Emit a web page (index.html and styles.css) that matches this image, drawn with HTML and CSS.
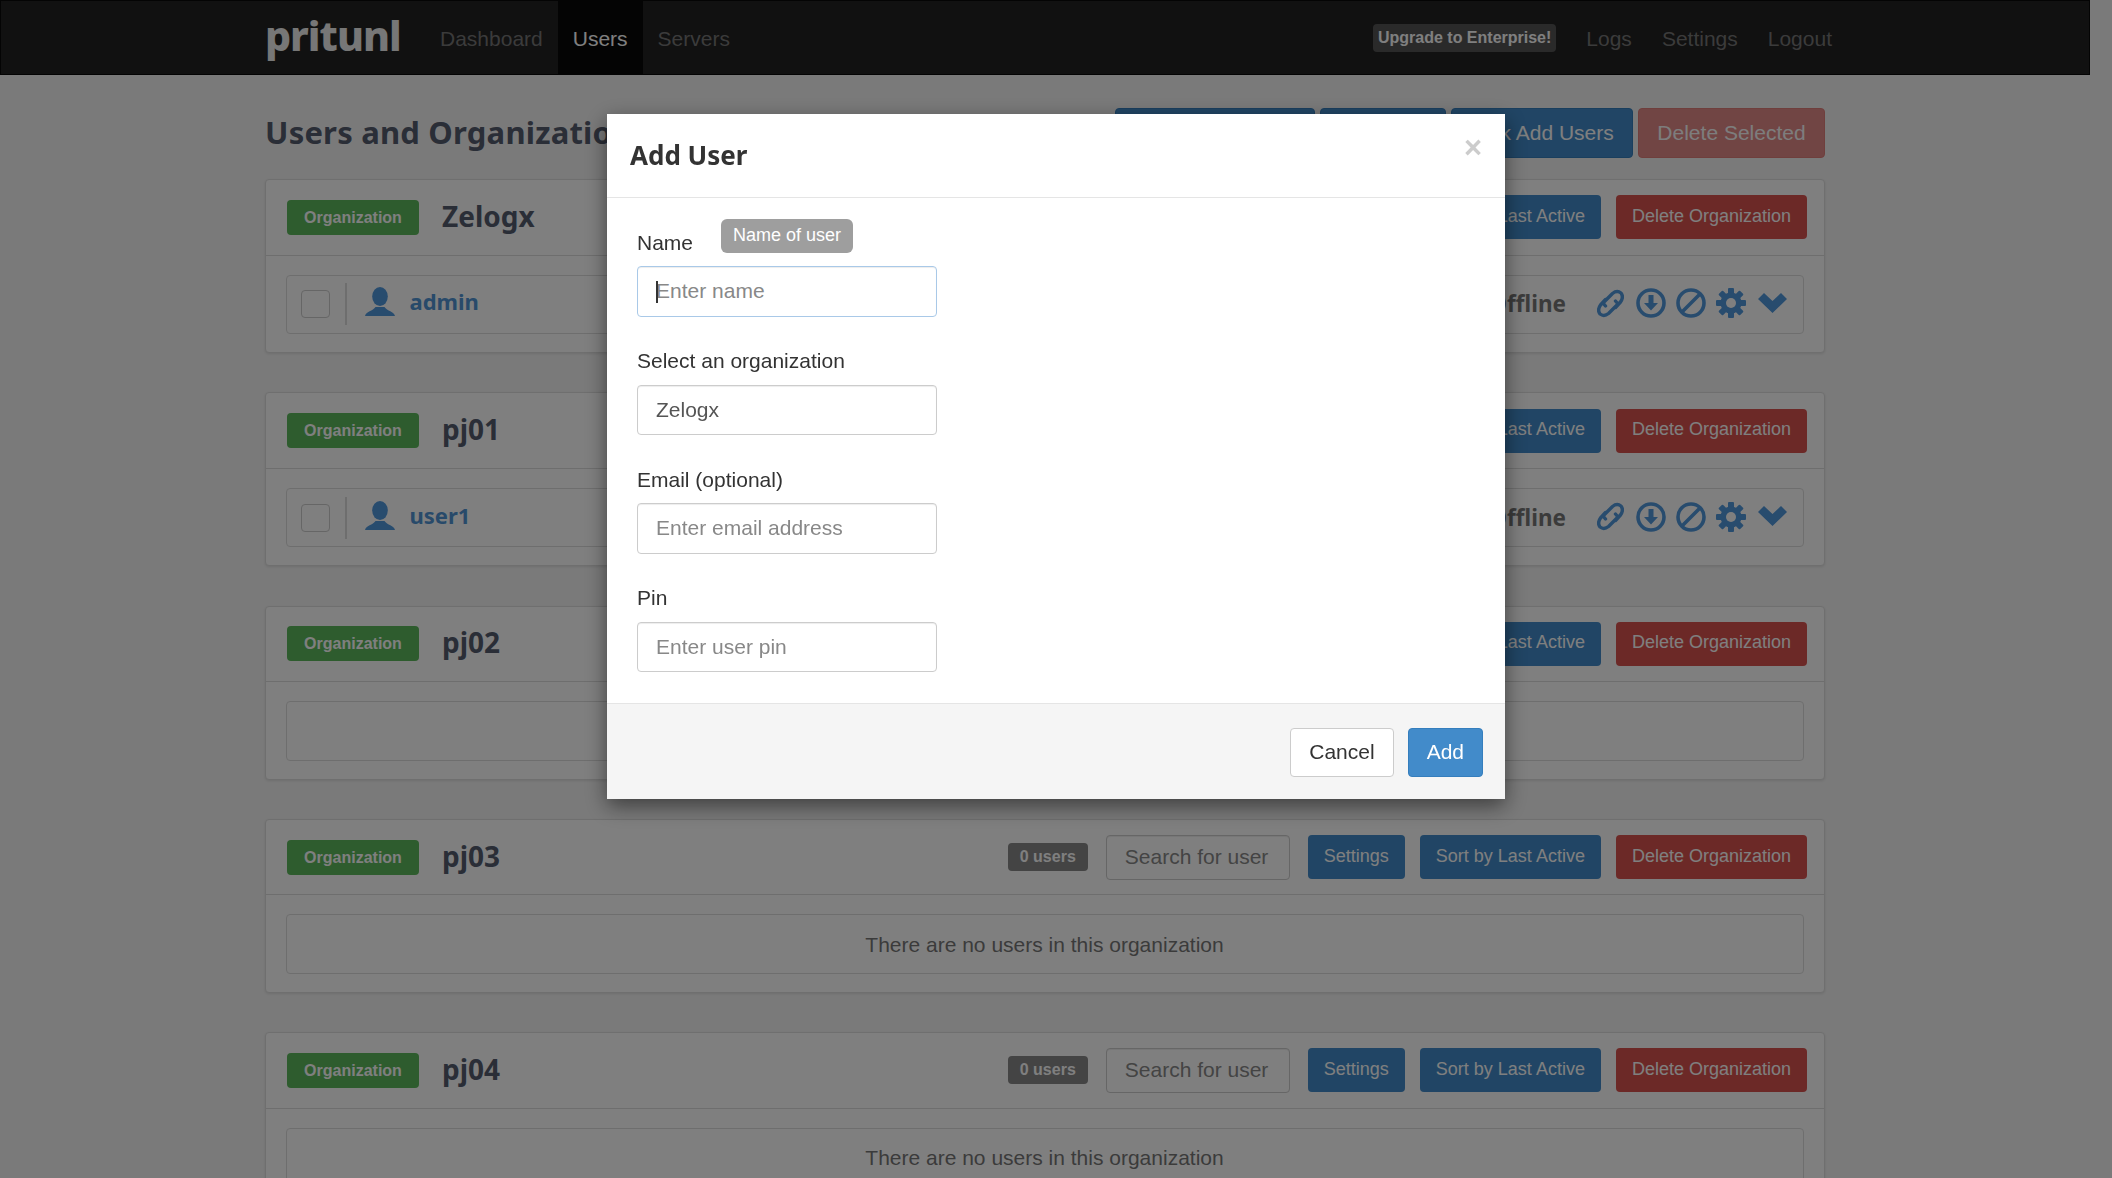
FILE: index.html
```html
<!DOCTYPE html>
<html lang="en">
<head>
<meta charset="utf-8">
<title>Users and Organizations - pritunl</title>
<link rel="stylesheet" href="styles.css">
</head>
<body>
<svg class="defs" width="0" height="0">
  <symbol id="i-user" viewBox="0 0 30 29"><ellipse cx="15" cy="9.5" rx="7.8" ry="9.5"/><path d="M0 29C.8 24.5 8 24 10.5 20h9C22 24 29.200 24.500 30 29Z"/></symbol>
  <symbol id="i-link" viewBox="0 0 27 31"><path class="ln ln-thin" d="M8.500 18 6 15 15.500 5.500Q20 2 24 5 27 9 23.500 14L18.500 19.500M18.500 13 21 16 11.500 25.500Q7 29 3 26 0 22 3.500 17L8.500 11.500"/></symbol>
  <symbol id="i-down" viewBox="0 0 30 30"><circle class="ln" cx="15" cy="15" r="13"/><path d="M12.500 7h5v8h4.500L15 22.500 8 15h4.500Z"/></symbol>
  <symbol id="i-ban" viewBox="0 0 30 30"><circle class="ln" cx="15" cy="15" r="13"/><path class="ln" d="M7 23 23 7"/></symbol>
  <symbol id="i-gear" viewBox="0 0 30 30">
    <g><rect x="12" y="0" width="6" height="30" rx="1"/><rect x="12" y="0" width="6" height="30" rx="1" transform="rotate(45 15 15)"/><rect x="12" y="0" width="6" height="30" rx="1" transform="rotate(90 15 15)"/><rect x="12" y="0" width="6" height="30" rx="1" transform="rotate(135 15 15)"/></g>
    <circle cx="15" cy="15" r="10.500"/><circle class="hole" cx="15" cy="15" r="5"/>
  </symbol>
  <symbol id="i-chev" viewBox="0 0 29 20"><path d="M0 6 6 0 14.500 8 23 0 29 6 14.500 20Z"/></symbol>
</svg>

<nav class="navbar">
  <a class="brand">pritunl</a>
  <a class="nav-link">Dashboard</a>
  <a class="nav-link active">Users</a>
  <a class="nav-link">Servers</a>
  <div class="nav-right">
    <span class="upgrade">Upgrade to Enterprise!</span>
    <a class="nav-link">Logs</a>
    <a class="nav-link">Settings</a>
    <a class="nav-link">Logout</a>
  </div>
</nav>

<main class="container">
  <div class="page-head">
    <h1 class="page-title">Users and Organizations</h1>
    <div class="page-actions">
      <button class="btn btn-blue btn-w1">Add Organization</button>
      <button class="btn btn-blue btn-w2">Add User</button>
      <button class="btn btn-blue btn-w3">Bulk Add Users</button>
      <button class="btn btn-red btn-faded btn-w4">Delete Selected</button>
    </div>
  </div>

  <section class="panel">
    <header class="panel-head">
      <span class="org-badge">Organization</span><h2 class="org-name">Zelogx</h2>
      <div class="org-actions">
        <span class="count">1 users</span><input class="search" placeholder="Search for user">
        <button class="sbtn btn-blue">Settings</button><button class="sbtn btn-blue">Sort by Last Active</button><button class="sbtn btn-red">Delete Organization</button>
      </div>
    </header>
    <div class="panel-body">
      <div class="row">
        <span class="check"></span><span class="divider"></span>
        <svg class="i-user"><use href="#i-user"/></svg><span class="uname">admin</span>
        <span class="status">Offline</span>
        <svg class="i-link"><use href="#i-link"/></svg><svg class="i-30"><use href="#i-down"/></svg><svg class="i-30"><use href="#i-ban"/></svg><svg class="i-30"><use href="#i-gear"/></svg><svg class="i-chev"><use href="#i-chev"/></svg>
      </div>
    </div>
  </section>

  <section class="panel">
    <header class="panel-head">
      <span class="org-badge">Organization</span><h2 class="org-name">pj01</h2>
      <div class="org-actions">
        <span class="count">1 users</span><input class="search" placeholder="Search for user">
        <button class="sbtn btn-blue">Settings</button><button class="sbtn btn-blue">Sort by Last Active</button><button class="sbtn btn-red">Delete Organization</button>
      </div>
    </header>
    <div class="panel-body">
      <div class="row">
        <span class="check"></span><span class="divider"></span>
        <svg class="i-user"><use href="#i-user"/></svg><span class="uname">user1</span>
        <span class="status">Offline</span>
        <svg class="i-link"><use href="#i-link"/></svg><svg class="i-30"><use href="#i-down"/></svg><svg class="i-30"><use href="#i-ban"/></svg><svg class="i-30"><use href="#i-gear"/></svg><svg class="i-chev"><use href="#i-chev"/></svg>
      </div>
    </div>
  </section>

  <section class="panel">
    <header class="panel-head">
      <span class="org-badge">Organization</span><h2 class="org-name">pj02</h2>
      <div class="org-actions">
        <span class="count">0 users</span><input class="search" placeholder="Search for user">
        <button class="sbtn btn-blue">Settings</button><button class="sbtn btn-blue">Sort by Last Active</button><button class="sbtn btn-red">Delete Organization</button>
      </div>
    </header>
    <div class="panel-body"><div class="row row-empty">There are no users in this organization</div></div>
  </section>

  <section class="panel">
    <header class="panel-head">
      <span class="org-badge">Organization</span><h2 class="org-name">pj03</h2>
      <div class="org-actions">
        <span class="count">0 users</span><input class="search" placeholder="Search for user">
        <button class="sbtn btn-blue">Settings</button><button class="sbtn btn-blue">Sort by Last Active</button><button class="sbtn btn-red">Delete Organization</button>
      </div>
    </header>
    <div class="panel-body"><div class="row row-empty">There are no users in this organization</div></div>
  </section>

  <section class="panel">
    <header class="panel-head">
      <span class="org-badge">Organization</span><h2 class="org-name">pj04</h2>
      <div class="org-actions">
        <span class="count">0 users</span><input class="search" placeholder="Search for user">
        <button class="sbtn btn-blue">Settings</button><button class="sbtn btn-blue">Sort by Last Active</button><button class="sbtn btn-red">Delete Organization</button>
      </div>
    </header>
    <div class="panel-body"><div class="row row-empty">There are no users in this organization</div></div>
  </section>
</main>

<div class="backdrop"></div>

<div class="modal">
  <header class="modal-head">
    <h3 class="modal-title">Add User</h3>
    <span class="close">×</span>
  </header>
  <form class="modal-body">
    <div class="group">
      <label class="label">Name</label>
      <span class="tip">Name of user</span>
      <div class="field">
        <input class="input input-focus" placeholder="Enter name">
        <span class="caret"></span>
      </div>
    </div>
    <div class="group">
      <label class="label">Select an organization</label>
      <select class="input input-select"><option>Zelogx</option></select>
    </div>
    <div class="group">
      <label class="label">Email (optional)</label>
      <input class="input" placeholder="Enter email address">
    </div>
    <div class="group">
      <label class="label">Pin</label>
      <input class="input" placeholder="Enter user pin">
    </div>
  </form>
  <footer class="modal-foot">
    <button class="mbtn mbtn-plain">Cancel</button>
    <button class="mbtn mbtn-primary">Add</button>
  </footer>
</div>
</body>
</html>
```

FILE: styles.css
```css
* { box-sizing: border-box; }
html, body { height: 100%; }
body {
  margin: 0;
  overflow: hidden;
  background: #f5f5f5;
  color: #333;
  font-family: "Liberation Sans", Arial, sans-serif;
  font-size: 21px;
}
.defs { position: absolute; }
button { font-family: inherit; cursor: pointer; }
h1, h2, h3 { margin: 0; font-family: "Noto Sans", sans-serif; }

/* navbar */
.navbar {
  display: flex;
  align-items: stretch;
  height: 75px;
  margin-right: 22px;
  padding: 0 242px 0 264px;
  background: #222;
  border: 1px solid #080808;
}
.brand {
  width: 160px;
  font-family: "Noto Sans", sans-serif;
  font-weight: 800;
  font-size: 41px;
  line-height: 68px;
  letter-spacing: -1px;
  color: #eee;
}
.nav-link {
  display: flex;
  align-items: center;
  padding: 3px 15px 0;
  color: #777;
}
.nav-link.active { background: #080808; color: #fff; }
.nav-right { display: flex; align-items: stretch; margin-left: auto; }
.upgrade {
  align-self: center;
  margin: 0 15px 0 0;
  padding: 0 5px;
  height: 28px;
  line-height: 28px;
  background: #555;
  border-radius: 4px;
  color: #fff;
  font-weight: bold;
  font-size: 16px;
  white-space: nowrap;
}

/* page */
.container { width: 1560px; margin-left: 265px; }
.page-head {
  display: flex;
  justify-content: space-between;
  align-items: center;
  margin-top: 33px;
  height: 50px;
  margin-bottom: 21px;
}
.page-title { margin-top: -3px; font-size: 31px; font-weight: 700; letter-spacing: .2px; color: #555c6e; white-space: nowrap; }
.page-actions { display: flex; gap: 5px; }
.btn {
  height: 50px;
  padding: 0 0 1px;
  border: 1px solid transparent;
  border-radius: 4px;
  color: #fff;
  font-size: 21px;
  white-space: nowrap;
}
.btn-w1 { width: 200px; }
.btn-w2 { width: 126px; }
.btn-w3 { width: 182px; }
.btn-w4 { width: 187px; }
.btn-blue { background: #428bca; border-color: #357ebd; }
.btn-red { background: #d9534f; border-color: #d43f3a; }
.btn-faded { opacity: .65; }

/* panels */
.panel {
  height: 174px;
  margin-bottom: 39.250px;
  background: #fff;
  border: 1px solid #dedede;
  border-radius: 4px;
  box-shadow: 0 1px 3px rgba(0,0,0,.1);
}
.panel-head {
  display: flex;
  align-items: center;
  height: 75.500px;
  padding: 0 17px 0 21px;
  border-bottom: 1.500px solid #ddd;
}
.org-badge {
  display: block;
  height: 35px;
  line-height: 35px;
  width: 132px;
  text-align: center;
  background: #5cb85c;
  border-radius: 4px;
  color: #fff;
  font-weight: bold;
  font-size: 16px;
}
.org-name { margin: -3px 0 0 23px; font-size: 28px; font-weight: 700; color: #555c6e; line-height: 40px; }
.org-actions { display: flex; align-items: center; margin-left: auto; }
.count {
  display: block;
  height: 28px;
  line-height: 28px;
  width: 80px;
  text-align: center;
  margin-right: 18px;
  background: #888;
  border-radius: 4px;
  color: #fff;
  font-weight: bold;
  font-size: 16px;
}
.search {
  width: 184px;
  height: 45px;
  padding: 0 18px;
  margin-right: 18px;
  border: 1.500px solid #ccc;
  border-radius: 4px;
  background: #fff;
  font: 21px "Liberation Sans", Arial, sans-serif;
  box-shadow: inset 0 1px 1px rgba(0,0,0,.075);
}
.search::placeholder { color: #888; opacity: 1; }
.sbtn {
  height: 44px;
  padding: 0 15px 2px;
  margin-right: 15px;
  border: 1px solid transparent;
  border-radius: 4px;
  color: #fff;
  font-size: 18px;
  white-space: nowrap;
}
.sbtn:last-child { margin-right: 0; }
.panel-body { padding: 19px 20.500px 0 19.500px; }
.row {
  display: flex;
  align-items: center;
  height: 59.500px;
  padding: 0 15.500px 0 14.500px;
  border: 1.500px solid #ddd;
  border-radius: 4px;
}
.row-empty { justify-content: center; padding: 1.500px 0 0; color: #777; }
.check { width: 29px; height: 28px; border: 1.500px solid #ccc; border-radius: 4px; background: #fff; }
.divider { width: 1.500px; height: 42px; margin: 0 18px 0 15px; background: #ddd; }
.i-user { width: 30px; height: 29px; fill: #5198dc; margin-top: -5px; }
.uname { margin: -6px 0 0 15px; font-family: "Noto Sans", sans-serif; font-weight: 700; font-size: 22px; color: #5194d4; }
.status { margin: -1px 31px 0 auto; font-family: "Noto Sans", sans-serif; font-weight: 700; font-size: 22.500px; color: #777; }
svg .ln { fill: none; stroke-width: 3.600; stroke-linecap: round; stroke-linejoin: round; }
svg .ln-thin { stroke-width: 3.400; }
.i-link, .i-30, .i-chev { fill: #5198dc; stroke: #5198dc; stroke-width: 0; }
.i-link { width: 27px; height: 31px; margin-top: -2px; margin-right: 12px; }
.i-30 { width: 30px; height: 30px; margin-top: -2px; margin-right: 10px; }
.i-chev { width: 29px; height: 20px; margin-top: -3px; margin-left: 2px; }
.hole { fill: #fff; }

/* overlay */
.backdrop { position: fixed; inset: 0; background: rgba(0,0,0,.5); }
.modal {
  position: fixed;
  top: 113.500px;
  left: 607px;
  width: 898px;
  height: 685px;
  display: flex;
  flex-direction: column;
  background: #fff;
  box-shadow: 0 7px 20px rgba(0,0,0,.5);
}
.modal-head {
  position: relative;
  flex: none;
  height: 84.500px;
  padding: 0 23px;
  border-bottom: 1.500px solid #e5e5e5;
}
.modal-title { font-size: 26px; font-weight: 700; line-height: 82px; color: #333; }
.close {
  position: absolute;
  top: 18px;
  right: 23px;
  font-family: "Liberation Sans", Arial, sans-serif;
  font-size: 31px;
  font-weight: bold;
  line-height: 1;
  color: #ccc;
}
.modal-body { flex: 1; padding: 32.500px 30px 0; }
.group { position: relative; margin-bottom: 32.500px; width: 300px; }
.group:last-child { margin-bottom: 0; }
.label { display: block; height: 25px; line-height: 24px; margin-bottom: 10.500px; color: #333; }
.tip {
  position: absolute;
  top: -11.500px;
  left: 84px;
  width: 132px;
  height: 34px;
  line-height: 32px;
  text-align: center;
  background: #9e9e9e;
  border-radius: 6px;
  color: #fff;
  font-size: 18px;
}
.field { position: relative; }
.input {
  display: block;
  width: 300px;
  height: 50.500px;
  padding: 0 18px;
  border: 1.500px solid #ccc;
  border-radius: 4px;
  background: #fff;
  color: #555;
  font: 21px "Liberation Sans", Arial, sans-serif;
  box-shadow: inset 0 1px 1px rgba(0,0,0,.075);
}
.input::placeholder { color: #888; opacity: 1; }
.input-focus { border-color: #a9c9e8; outline: 0; }
.input-select { appearance: none; }
.caret {
  position: absolute;
  left: 19px;
  top: 15px;
  width: 1.500px;
  height: 22px;
  background: #333;
}
.modal-foot {
  display: flex;
  flex: none;
  justify-content: flex-end;
  align-items: flex-start;
  gap: 14px;
  height: 96px;
  padding: 24px 22px 0;
  background: #f5f5f5;
  border-top: 1.500px solid #e5e5e5;
}
.mbtn { height: 49.500px; padding: 0 18px 1.500px; border-radius: 4px; font-size: 21px; border: 1.500px solid transparent; }
.mbtn-plain { background: #fff; border-color: #ccc; color: #333; }
.mbtn-primary { background: #428bca; border-color: #357ebd; color: #fff; }
```
